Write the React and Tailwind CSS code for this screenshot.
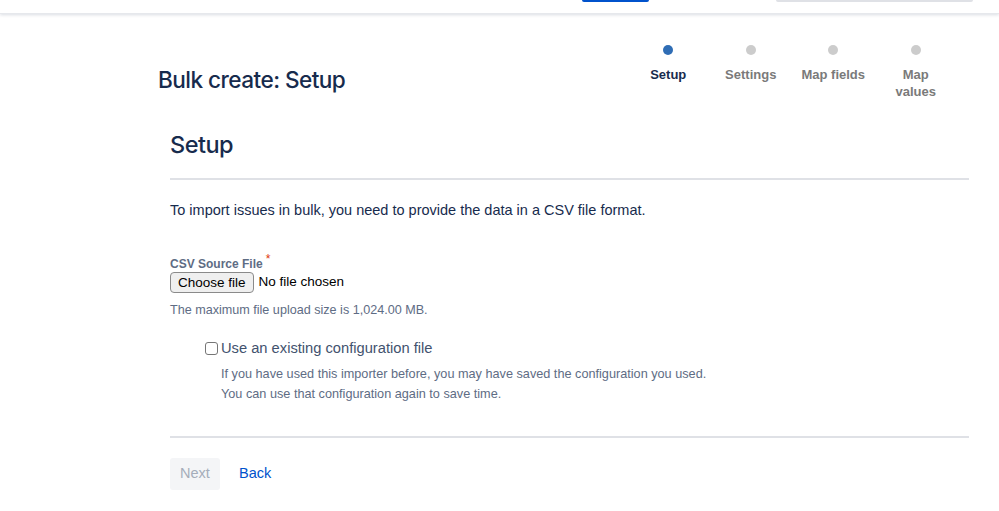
import React from 'react';

const steps = [
  { label: 'Setup', active: true },
  { label: 'Settings' },
  { label: 'Map fields' },
  { label: 'Map values' },
];

const Stepper = () => (
  <div className="flex">
    {steps.map((s) => (
      <div key={s.label} className="w-[82.5px] flex flex-col items-center">
        <span className={`mt-[2px] w-[10px] h-[10px] rounded-full ${s.active ? 'bg-[#2f6db5]' : 'bg-[#cccccc]'}`}></span>
        <span className={`mt-[11px] text-[13px] leading-[17px] font-bold text-center px-2 ${s.active ? 'text-[#172b4d]' : 'text-[#7a7a7a]'}`}>
          {s.label}
        </span>
      </div>
    ))}
  </div>
);

export default function App() {
  return (
    <div className="w-[999px] h-[511px] overflow-hidden bg-white font-['Liberation_Sans','Inter',sans-serif] text-[#172b4d]">
      {/* Top nav (cut off) */}
      <div className="h-[14px] relative shadow-[0_1px_3px_rgba(9,30,66,0.15)] border-b border-[#e6e8ec]">
        <div className="absolute left-[582px] top-0 w-[67px] h-[2px] bg-[#0052cc] rounded-b-[2px]"></div>
        <div className="absolute left-[776px] top-0 w-[197px] h-[2px] bg-[#dfe1e6] rounded-b-[3px]"></div>
      </div>

      {/* Page header */}
      <div className="flex justify-between pl-[158px] pr-[42px] pt-[29px]">
        <h1 className="mt-[23px] font-['Inter',sans-serif] text-[22.6px] leading-[28px] font-medium tracking-[-0.55px]">Bulk create: Setup</h1>
        <Stepper />
      </div>

      {/* Content */}
      <div className="ml-[170px] mr-[30px] mt-[31px]">
        <h2 className="font-['Inter',sans-serif] text-[23.5px] leading-[28px] font-medium tracking-[-0.5px]">Setup</h2>
        <div className="mt-[19px] h-[2px] bg-[#dfe1e6]"></div>

        <p className="mt-[20px] text-[14.5px] leading-[20px] text-[#172b4d]">
          To import issues in bulk, you need to provide the data in a CSV file format.
        </p>

        <div className="mt-[37px]">
          <div className="text-[12px] leading-[14px] font-bold text-[#5e6c84]">
            CSV Source File<span className="relative -top-[5px] ml-[3px] text-[#de350b] font-normal">*</span>
          </div>
          <div className="flex items-center mt-[1px]">
            <span className="h-[21px] px-[7px] border border-[#8a8a8a] rounded-[4px] bg-[#efefef] text-[13.5px] leading-[19px] text-black">
              Choose file
            </span>
            <span className="ml-[5px] text-[13.5px] text-black">No file chosen</span>
          </div>
          <div className="mt-[9px] text-[12.6px] leading-[16px] text-[#5e6c84]">
            The maximum file upload size is 1,024.00 MB.
          </div>
        </div>

        <div className="mt-[20px] ml-[35px]">
          <label className="flex items-center">
            <span className="w-[13px] h-[13px] border border-[#767676] rounded-[3px] bg-white"></span>
            <span className="ml-[3px] text-[14.7px] leading-[20px] text-[#42526e]">Use an existing configuration file</span>
          </label>
          <div className="ml-[16px] mt-[6px] text-[12.7px] leading-[20px] text-[#5e6c84]">
            <div>If you have used this importer before, you may have saved the configuration you used.</div>
            <div>You can use that configuration again to save time.</div>
          </div>
        </div>

        <div className="mt-[32px] h-[2px] bg-[#dfe1e6]"></div>

        <div className="mt-[20px] flex items-center gap-[19px]">
          <button className="h-[32px] w-[50px] rounded-[3px] bg-[#f4f5f7] text-[#a5adba] text-[14.5px]" disabled>Next</button>
          <a className="text-[14.5px] text-[#0052cc]">Back</a>
        </div>
      </div>
    </div>
  );
}
